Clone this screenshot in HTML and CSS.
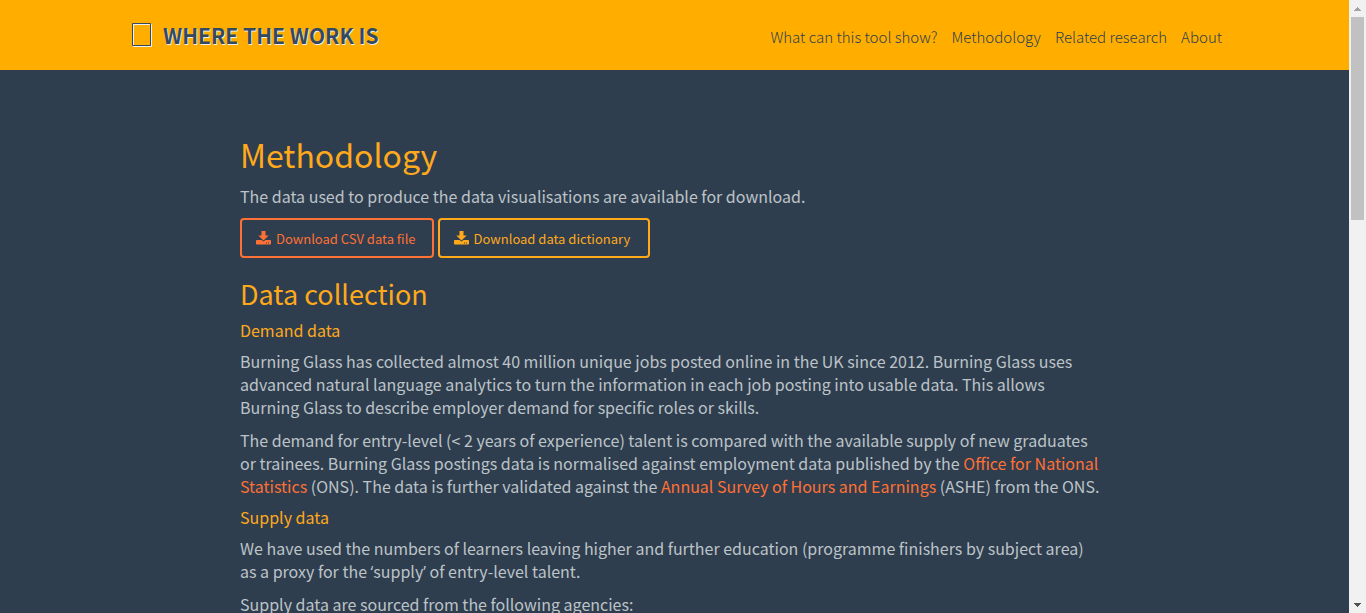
FILE: index.html
```html
<!DOCTYPE html>
<html lang="en">
<head>
<meta charset="utf-8">
<title>Methodology - Where the Work Is</title>
<link rel="stylesheet" href="styles.css">
</head>
<body>
<div class="page">
  <header class="navbar">
    <a class="brand" href="#">
      <svg class="brand-icon" viewBox="0 0 20 24" aria-hidden="true">
        <path d="M1.5 1.5h18v22h-18z" fill="none" stroke="#ecf0f1"/>
        <path d="M.5 .5h18v22h-18z" fill="none" stroke="#34495e"/>
      </svg>
      <span>WHERE THE WORK IS</span>
    </a>
    <nav class="nav">
      <a href="#">What can this tool show?</a>
      <a href="#">Methodology</a>
      <a href="#">Related research</a>
      <a href="#">About</a>
    </nav>
  </header>
  <main class="content">
    <h1>Methodology</h1>
    <p>The data used to produce the data visualisations are available for download.</p>
    <div class="actions">
      <a class="btn btn-data" href="#">
        <svg class="btn-icon" viewBox="0 0 15 14" aria-hidden="true"><path fill="currentColor" fill-rule="evenodd" d="M5.500 0h4v4.500h3.200L7.500 9.500 2.300 4.500h3.200zM.8 9h4.700l2 1.500L9.500 9h4.700q.8 0 .8.800v2.900q0 .8-.8.8H.8q-.8 0-.8-.8V9.800Q0 9 .8 9zM10 11.500v1h1v-1zM12 11.500v1h1v-1z"/></svg>
        Download CSV data file</a>
      <a class="btn btn-dictionary" href="#">
        <svg class="btn-icon" viewBox="0 0 15 14" aria-hidden="true"><path fill="currentColor" fill-rule="evenodd" d="M5.500 0h4v4.500h3.200L7.500 9.500 2.300 4.500h3.200zM.8 9h4.700l2 1.500L9.500 9h4.700q.8 0 .8.800v2.900q0 .8-.8.8H.8q-.8 0-.8-.8V9.800Q0 9 .8 9zM10 11.500v1h1v-1zM12 11.500v1h1v-1z"/></svg>
        Download data dictionary</a>
    </div>
    <h2>Data collection</h2>
    <h3>Demand data</h3>
    <p>Burning Glass has collected almost 40 million unique jobs posted online in the UK since 2012. Burning Glass uses advanced natural language analytics to turn the information in each job posting into usable data. This allows Burning Glass to describe employer demand for specific roles or skills.</p>
    <p>The demand for entry-level (&lt; 2 years of experience) talent is compared with the available supply of new graduates or trainees. Burning Glass postings data is normalised against employment data published by the <a href="#">Office for National Statistics</a> (ONS). The data is further validated against the <a href="#">Annual Survey of Hours and Earnings</a> (ASHE) from the ONS.</p>
    <h3>Supply data</h3>
    <p>We have used the numbers of learners leaving higher and further education (programme finishers by subject area) as a proxy for the <span class="quote">‘</span>supply<span class="quote">’</span> of entry-level talent.</p>
    <p>Supply data are sourced from the following agencies:</p>
  </main>
</div>
<div class="scrollbar">
  <button class="scroll-step" type="button" aria-label="Scroll up"><svg viewBox="0 0 7 4" aria-hidden="true"><path fill="#a3a3a3" d="M3 0h1v1h1v1h1v1h1v1H0V3h1V2h1V1h1z"/></svg></button>
  <div class="scroll-track"><div class="scroll-thumb"></div></div>
  <button class="scroll-step" type="button" aria-label="Scroll down"><svg viewBox="0 0 7 4" aria-hidden="true"><path fill="#505050" d="M0 0h7v1H6v1H5v1H4v1H3V3H2V2H1V1H0z"/></svg></button>
</div>
</body>
</html>
```
FILE: styles.css
```css
* { box-sizing: border-box; }

body {
  margin: 0;
  display: flex;
  height: 100vh;
  overflow: hidden;
  background: #2e3e4f;
  color: #bdc3c7;
  font-family: "Source Sans Pro", "Noto Sans CJK SC", sans-serif;
  font-size: 16px;
  line-height: 23px;
}

a { color: #ff7034; text-decoration: none; }

.page { flex: 1; min-width: 0; overflow: hidden; }

.navbar {
  display: flex;
  justify-content: space-between;
  align-items: center;
  height: 70px;
  padding: 0 127px 0 132px;
  background: #ffae00;
}

.brand {
  display: flex;
  align-items: center;
  gap: 11px;
  color: #34495e;
  font-size: 21px;
  font-weight: 700;
  text-shadow: 1px 1px 0 #ecf0f1;
}

.brand-icon { width: 20px; height: 24px; }

.nav { display: flex; gap: 14px; padding-top: 2px; }

.nav a {
  color: #2e3e4f;
  font-size: 15px;
  font-weight: 300;
}

.content {
  max-width: 869px;
  margin: 0 auto;
  padding: 64px 7px 0 0;
}

h1, h2, h3 {
  margin: 0;
  color: #ffa91b;
  font-weight: 400;
}

h1 { font-size: 32px; line-height: 40px; margin-bottom: 11px; }
h2 { font-size: 27px; line-height: 34px; margin-bottom: 9px; }
h3 { font-size: 16px; line-height: 20px; margin-bottom: 10px; }

p { margin: 0 0 10px; }
p + h3 { margin-top: -1px; }

.quote { font-family: "Open Sans", sans-serif; line-height: 1; }

.actions { display: flex; gap: 4px; margin-bottom: 19px; }

.btn {
  display: flex;
  align-items: center;
  gap: 5px;
  height: 40px;
  padding: 0 16px 0 14px;
  border: 2px solid currentColor;
  border-radius: 4px;
  font-size: 13px;
}

.btn-data { color: #ff7034; }
.btn-dictionary { padding-right: 18px; color: #ffa91b; }
.btn-icon { width: 15px; height: 14px; }

.scrollbar {
  display: flex;
  flex-direction: column;
  width: 17px;
  background: #f1f1f1;
}

.scroll-step {
  display: flex;
  align-items: center;
  justify-content: center;
  height: 17px;
  padding: 0;
  border: 0;
  background: none;
}

.scroll-step svg { width: 7px; height: 4px; }
.scroll-track { flex: 1; padding: 0 2px; }
.scroll-thumb { height: 35%; background: #c1c1c1; }
```
